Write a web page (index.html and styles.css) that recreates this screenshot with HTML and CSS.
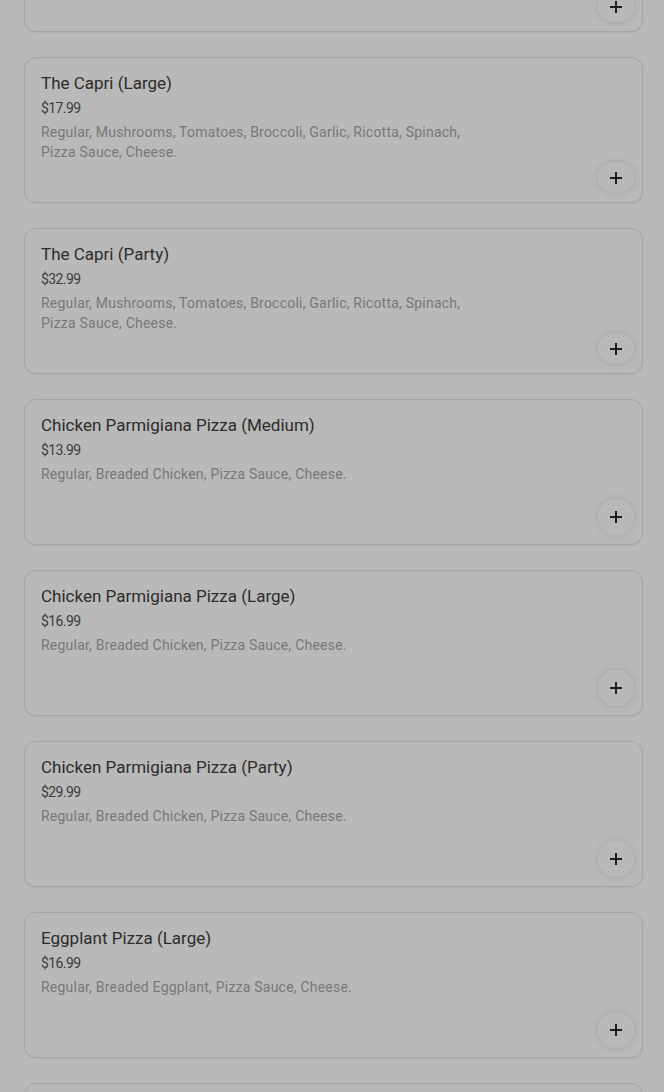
FILE: index.html
```html
<!DOCTYPE html>
<html lang="en">
<head>
  <meta charset="UTF-8">
  <meta name="viewport" content="width=device-width, initial-scale=1.0">
  <title>Menu</title>
  <link rel="stylesheet" href="styles.css">
</head>
<body>
  <div class="menu-list">
    <div class="item-card">
      <div class="item-name">The Capri (Medium)</div>
      <div class="item-price">$14.99</div>
      <div class="item-desc">Regular, Mushrooms, Tomatoes, Broccoli, Garlic, Ricotta, Spinach, Pizza Sauce, Cheese.</div>
      <button class="add-button" aria-label="Add"><svg width="12" height="12" viewBox="0 0 12 12"><path d="M6 0v12M0 6h12" stroke="currentColor" stroke-width="2"/></svg></button>
    </div>
    <div class="item-card">
      <div class="item-name">The Capri (Large)</div>
      <div class="item-price">$17.99</div>
      <div class="item-desc">Regular, Mushrooms, Tomatoes, Broccoli, Garlic, Ricotta, Spinach, Pizza Sauce, Cheese.</div>
      <button class="add-button" aria-label="Add"><svg width="12" height="12" viewBox="0 0 12 12"><path d="M6 0v12M0 6h12" stroke="currentColor" stroke-width="2"/></svg></button>
    </div>
    <div class="item-card">
      <div class="item-name">The Capri (Party)</div>
      <div class="item-price">$32.99</div>
      <div class="item-desc">Regular, Mushrooms, Tomatoes, Broccoli, Garlic, Ricotta, Spinach, Pizza Sauce, Cheese.</div>
      <button class="add-button" aria-label="Add"><svg width="12" height="12" viewBox="0 0 12 12"><path d="M6 0v12M0 6h12" stroke="currentColor" stroke-width="2"/></svg></button>
    </div>
    <div class="item-card">
      <div class="item-name">Chicken Parmigiana Pizza (Medium)</div>
      <div class="item-price">$13.99</div>
      <div class="item-desc">Regular, Breaded Chicken, Pizza Sauce, Cheese.</div>
      <button class="add-button" aria-label="Add"><svg width="12" height="12" viewBox="0 0 12 12"><path d="M6 0v12M0 6h12" stroke="currentColor" stroke-width="2"/></svg></button>
    </div>
    <div class="item-card">
      <div class="item-name">Chicken Parmigiana Pizza (Large)</div>
      <div class="item-price">$16.99</div>
      <div class="item-desc">Regular, Breaded Chicken, Pizza Sauce, Cheese.</div>
      <button class="add-button" aria-label="Add"><svg width="12" height="12" viewBox="0 0 12 12"><path d="M6 0v12M0 6h12" stroke="currentColor" stroke-width="2"/></svg></button>
    </div>
    <div class="item-card">
      <div class="item-name">Chicken Parmigiana Pizza (Party)</div>
      <div class="item-price">$29.99</div>
      <div class="item-desc">Regular, Breaded Chicken, Pizza Sauce, Cheese.</div>
      <button class="add-button" aria-label="Add"><svg width="12" height="12" viewBox="0 0 12 12"><path d="M6 0v12M0 6h12" stroke="currentColor" stroke-width="2"/></svg></button>
    </div>
    <div class="item-card">
      <div class="item-name">Eggplant Pizza (Large)</div>
      <div class="item-price">$16.99</div>
      <div class="item-desc">Regular, Breaded Eggplant, Pizza Sauce, Cheese.</div>
      <button class="add-button" aria-label="Add"><svg width="12" height="12" viewBox="0 0 12 12"><path d="M6 0v12M0 6h12" stroke="currentColor" stroke-width="2"/></svg></button>
    </div>
    <div class="item-card">
      <div class="item-name">Eggplant Pizza (Party)</div>
      <div class="item-price">$31.99</div>
      <div class="item-desc">Regular, Breaded Eggplant, Pizza Sauce, Cheese.</div>
      <button class="add-button" aria-label="Add"><svg width="12" height="12" viewBox="0 0 12 12"><path d="M6 0v12M0 6h12" stroke="currentColor" stroke-width="2"/></svg></button>
    </div>
  </div>

  <!-- modal backdrop -->
  <div class="backdrop"></div>
</body>
</html>
```

FILE: styles.css
```css
body {
  margin: 0;
  padding: 0;
  background-color: #fff;
  font-family: Roboto, "Liberation Sans", sans-serif;
  overflow: hidden;
}

.menu-list {
  display: flex;
  flex-direction: column;
  gap: 25px;
  padding: 0 21px 0 24px;
  margin-top: -114px; /* list is scrolled */
}

.item-card {
  display: flex;
  flex-direction: column;
  box-sizing: border-box;
  height: 146px;
  padding: 15px 8px 9px 16px;
  border: 1px solid #e4e4e4;
  border-radius: 12px;
  box-shadow: 0 1px 2px rgba(0, 0, 0, 0.06);
  background-color: #fff;
}

.item-name {
  font-size: 17px;
  line-height: 20px;
  color: #3d3d3d;
}

.item-price {
  margin-top: 5px;
  font-size: 14px;
  line-height: 20px;
  color: #545454;
  letter-spacing: -0.6px;
}

.item-desc {
  margin-top: 4px;
  max-width: 440px;
  font-size: 14px;
  line-height: 20px;
  color: #a6a6a6;
  letter-spacing: 0.22px;
}

.add-button {
  margin-top: auto;
  align-self: flex-end;
  width: 36px;
  height: 36px;
  display: flex;
  justify-content: center;
  align-items: center;
  padding: 0;
  border: none;
  border-radius: 50%;
  background-color: #fff;
  color: #2a2a2a;
  box-shadow: 0 0 8px rgba(0, 0, 0, 0.12);
  cursor: pointer;
}

.backdrop {
  position: fixed;
  inset: 0;
  background-color: rgba(0, 0, 0, 0.275);
}
```
